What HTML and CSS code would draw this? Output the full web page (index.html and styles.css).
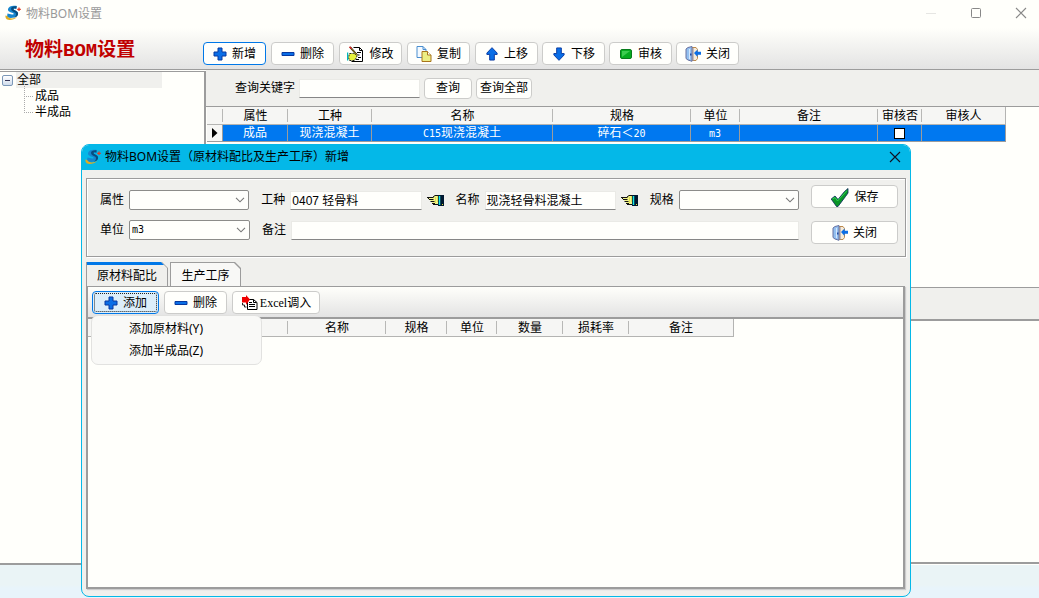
FILE: index.html
```
<!DOCTYPE html>
<html lang="zh-CN">
<head>
<meta charset="utf-8">
<title>物料BOM设置</title>
<link rel="stylesheet" href="styles.css">
</head>
<body>
<svg class="defs" aria-hidden="true">
  <defs>
    <symbol id="logo" viewBox="0 0 16 16">
      <path d="M12 1C8 0 3.500 1 3 4c-.4 2.200 2 3 4 3.700C9.500 8.500 9 9.500 7 9.500L2.500 8.500 2 12c4 2 10 .5 11-3 .3-2.300-2-3.300-3.700-4C7 4.200 8.500 3.400 11 4.200z" fill="#1686cf"/>
      <path d="M11.500 1.300C8 1 6 2 6 4s2.500 2.500 4.300 3.700c1.400 1.300.7 3.500-1.300 5 3-.6 5-3 3.700-5.500C11.500 5.700 8.500 5 8.500 4s1.500-.8 3-.3z" fill="#074d80"/>
      <path d="M.5 10.500C-.5 16 7 16.500 12.500 12 9 14 3 14 2.300 11z" fill="#e0ad20"/>
      <path d="M14 2.500v3.600M12.200 4.300h3.600" stroke="#e23a24" stroke-width="1.300"/>
    </symbol>
    <symbol id="plus" viewBox="0 0 14 14">
      <path d="M5 1h4v4h4v4H9v4H5V9H1V5h4z" fill="#0a6ee6" stroke="#0638a0"/>
    </symbol>
    <symbol id="minus" viewBox="0 0 14 14">
      <path d="M1 5.500h12v3H1z" fill="#0a6ee6" stroke="#0638a0"/>
    </symbol>
    <symbol id="edit" viewBox="0 0 17 17">
      <path d="M6.500 1.500h6l3 3v11H4.500" fill="#fff" stroke="#000"/>
      <path d="M12.500 1.500v3h3" fill="none" stroke="#000"/>
      <path d="M10 6.500h4M11 9h1.500M11 11.500h3M9 13.500h3" stroke="#000"/>
      <path d="M2.500 7.500h4l4 1-1 3-2 3h-5l-1-3z" fill="#e6f23c" stroke="#222" stroke-dasharray="2 1"/>
      <path d="M.5 6.500v8" stroke="#00b8b8" stroke-width="1.500"/>
      <path d="M3 1l7 8" stroke="#000" stroke-width="1.800"/>
      <path d="M3 1l7 8" stroke="#e8c820" stroke-width=".8"/>
      <path d="M2.500.8l2 2" stroke="#d22" stroke-width="1.500"/>
    </symbol>
    <symbol id="copy" viewBox="0 0 15 16">
      <path d="M.5.500h6l3 3v8h-9z" fill="#f4faff" stroke="#4a8ed0"/>
      <path d="M6.500.5v3h3" fill="none" stroke="#4a8ed0"/>
      <path d="M5.500 5.500h5.500l3.500 3.500v6.500h-9z" fill="#ecee84" stroke="#a8741c"/>
      <path d="M11 5.500V9h3.500" fill="#fff" stroke="#a8741c"/>
    </symbol>
    <symbol id="up" viewBox="0 0 14 15">
      <path d="M7 .7l5.500 5.800v1.500H9.500v6h-5V8h-3V6.500z" fill="#0a6ee6" stroke="#0638a0"/>
    </symbol>
    <symbol id="down" viewBox="0 0 14 15">
      <path d="M7 14.300l5.500-5.800V7H9.500V1h-5v6h-3v1.500z" fill="#0a6ee6" stroke="#0638a0"/>
    </symbol>
    <symbol id="audit" viewBox="0 0 14 14">
      <rect x="1.500" y="2.500" width="11" height="9" rx="1.500" fill="#06ac20" stroke="#087c1c"/>
      <path d="M3 4h8L3 10z" fill="#3ccc50"/>
    </symbol>
    <symbol id="door" viewBox="0 0 16 16">
      <path d="M7 1.500h4l1.500 2v9l-1.500 2H7z" fill="#f8ecd8" stroke="#bc8a4c"/>
      <path d="M1 3l2-1.500 4-1v14.800L3 14l-2-1.500z" fill="#94c0f0" stroke="#6670a0"/>
      <path d="M4.500 3v10" stroke="#d4e6fc"/>
      <path d="M5 7.500h1.500v2H5z" fill="#2448a0"/>
      <path d="M8 2v13" stroke="#8c8ca4"/>
      <path d="M9 7l3.500-3.500v2.200H16v3h-3.500V11z" fill="#0a6ee6"/>
    </symbol>
    <symbol id="check" viewBox="0 0 18 19">
      <path d="M.7 11l3.800-3 3 3.500L14 3.500l3.500-3v4.500l-2.500 3.500-7.500 10H6z" fill="#0a9428" stroke="#08245c" stroke-width=".8"/>
      <path d="M2 11l2.500-1.500L7 13 16.500 2.500" fill="none" stroke="#30d450"/>
    </symbol>
    <symbol id="hand" viewBox="0 0 17 12">
      <path d="M.5 3.500h5l2-2h4v9h-5l-1-1.500-1.500-1.500-1-1.500L1 5z" fill="#f0f488"/>
      <path d="M0 3.500h6.500M1 4.500h1M2 5.500h4.500M3.500 7.500h4M5 9.500h3M6 10.500h5.500M6 3l2-1.500h3.500" fill="none" stroke="#111"/>
      <path d="M8.500 3.500v5M10.500 2.500v6" stroke="#d6c820" stroke-dasharray="1 1"/>
      <path d="M11 1h6v11h-6z" fill="#001830"/>
      <path d="M12.500 2v9" stroke="#18e8e8" stroke-width="1.500"/>
      <path d="M15 10h1v1h-1z" fill="#e8e820"/>
    </symbol>
    <symbol id="import" viewBox="0 0 17 15">
      <path d="M6.500 4.500h6l3.500 3v7H6.500z" fill="#fff" stroke="#000"/>
      <path d="M8 7.500h3M8 9.500h6M8 11.500h6M12.500 4.500v3h3" fill="none" stroke="#000"/>
      <path d="M1 2h4V0l4 4.500L5 10V7.500H1z" fill="#f00000"/>
      <path d="M1.500 8v2h2v2h2" fill="none" stroke="#222"/>
    </symbol>
    <symbol id="close" viewBox="0 0 12 12">
      <path d="M1 1l10 10M11 1L1 11" stroke="currentColor" stroke-width="1.100"/>
    </symbol>
    <symbol id="chevron" viewBox="0 0 10 6">
      <path d="M1 .8l4 4 4-4" fill="none" stroke="#777" stroke-width="1.100"/>
    </symbol>
  </defs>
</svg>

<div class="window">
  <header class="titlebar">
    <svg class="i16"><use href="#logo"/></svg>
    <span class="caption">物料BOM设置</span>
    <div class="winctl">
      <button class="ctl faint" aria-label="最小化"><svg class="i12" viewBox="0 0 12 12"><path d="M1 6.500h10" stroke="currentColor"/></svg></button>
      <button class="ctl" aria-label="最大化"><svg class="i12" viewBox="0 0 12 12"><rect x="1.500" y="1.500" width="9" height="9" rx="1" fill="none" stroke="currentColor"/></svg></button>
      <button class="ctl" aria-label="关闭窗口"><svg class="i12"><use href="#close"/></svg></button>
    </div>
  </header>

  <div class="toolbar">
    <h1 class="heading">物料BOM设置</h1>
    <div class="btns">
      <button class="btn active"><svg class="i14"><use href="#plus"/></svg>新增</button>
      <button class="btn"><svg class="i14"><use href="#minus"/></svg>删除</button>
      <button class="btn"><svg class="i17"><use href="#edit"/></svg>修改</button>
      <button class="btn"><svg class="i16"><use href="#copy"/></svg>复制</button>
      <button class="btn"><svg class="i14"><use href="#up"/></svg>上移</button>
    </div>
    <div class="btns tight">
      <button class="btn"><svg class="i14"><use href="#down"/></svg>下移</button>
      <button class="btn"><svg class="i14"><use href="#audit"/></svg>审核</button>
      <button class="btn"><svg class="i16"><use href="#door"/></svg>关闭</button>
    </div>
  </div>

  <div class="work">
    <nav class="tree">
      <div class="root"><button class="toggle" aria-label="折叠"></button><span class="node selected">全部</span></div>
      <ul class="kids">
        <li>成品</li>
        <li>半成品</li>
      </ul>
    </nav>
    <main class="right">
      <form class="search">
        <label for="kw">查询关键字</label>
        <input class="text kw" id="kw" type="text">
        <button class="btn small" type="button">查询</button>
        <button class="btn small wide" type="button">查询全部</button>
      </form>
      <div class="upper">
        <table class="grid main-grid">
          <colgroup><col class="w16"><col class="w65"><col class="w84"><col class="w181"><col class="w138"><col class="w49"><col class="w138"><col class="w44"><col class="w84"></colgroup>
          <thead><tr><th></th><th>属性</th><th>工种</th><th>名称</th><th>规格</th><th>单位</th><th>备注</th><th>审核否</th><th>审核人</th></tr></thead>
          <tbody><tr><td class="mark"><svg class="tri" viewBox="0 0 6 10"><path d="M0 0l5.500 5L0 10z"/></svg></td><td>成品</td><td>现浇混凝土</td><td><span class="mono">C15</span>现浇混凝土</td><td>碎石＜<span class="mono">20</span></td><td><span class="mono">m3</span></td><td></td><td><input class="tick" type="checkbox" aria-label="审核否"></td><td></td></tr></tbody>
        </table>
      </div>
      <div class="band"></div>
      <div class="lower"></div>
    </main>
  </div>
  <footer class="status"></footer>
</div>

<section class="dialog" role="dialog" aria-labelledby="dlg">
  <header class="dlg-title">
    <svg class="i16"><use href="#logo"/></svg>
    <span id="dlg">物料BOM设置（原材料配比及生产工序）新增</span>
    <button class="ctl dark" aria-label="关闭对话框"><svg class="i12"><use href="#close"/></svg></button>
  </header>
  <div class="dlg-body">
    <form class="group">
      <div class="fields">
        <div class="row">
          <div class="field"><label for="attr">属性</label><span class="combo"><select id="attr"><option></option></select><svg><use href="#chevron"/></svg></span></div>
          <div class="field"><label for="kind">工种</label><input class="text mid" id="kind" type="text" value="0407 轻骨料"><button class="pick" type="button" aria-label="选择工种"><svg><use href="#hand"/></svg></button></div>
          <div class="field"><label for="name">名称</label><input class="text mid" id="name" type="text" value="现浇轻骨料混凝土"><button class="pick" type="button" aria-label="选择名称"><svg><use href="#hand"/></svg></button></div>
          <div class="field"><label for="spec">规格</label><span class="combo"><select id="spec"><option></option></select><svg><use href="#chevron"/></svg></span></div>
        </div>
        <div class="row">
          <div class="field"><label for="unit">单位</label><span class="combo"><select class="mono" id="unit"><option>m3</option></select><svg><use href="#chevron"/></svg></span></div>
          <div class="field grow"><label for="note">备注</label><input class="text" id="note" type="text"></div>
        </div>
      </div>
      <div class="actions">
        <button class="btn" type="button"><svg class="i19"><use href="#check"/></svg>保存</button>
        <button class="btn" type="button"><svg class="i16"><use href="#door"/></svg>关闭</button>
      </div>
    </form>

    <div class="tabs" role="tablist">
      <button class="tab current" role="tab" aria-selected="true">原材料配比</button>
      <button class="tab" role="tab" aria-selected="false">生产工序</button>
    </div>
    <div class="panel">
      <div class="panel-bar">
        <div class="anchor">
          <button class="btn add" aria-haspopup="menu"><svg class="i14"><use href="#plus"/></svg>添加</button>
          <div class="menu" role="menu">
            <button role="menuitem">添加原材料(Y)</button>
            <button role="menuitem">添加半成品(Z)</button>
          </div>
        </div>
        <button class="btn"><svg class="i14"><use href="#minus"/></svg>删除</button>
        <button class="btn excel"><svg class="i17"><use href="#import"/></svg><span>Excel调入</span></button>
      </div>
      <table class="grid">
        <colgroup><col class="w200"><col class="w98"><col class="w61"><col class="w50"><col class="w66"><col class="w66"><col class="w105"></colgroup>
        <thead><tr><th></th><th>名称</th><th>规格</th><th>单位</th><th>数量</th><th>损耗率</th><th>备注</th></tr></thead>
      </table>
    </div>
  </div>
</section>
</body>
</html>
```

FILE: styles.css
```
* { box-sizing: border-box; }

body {
  margin: 0;
  background: #fffffb;
  color: #000;
  font: 12px/16px "Liberation Sans", "Noto Sans CJK SC", sans-serif;
}

button, input, select { font: inherit; color: inherit; }
svg { display: block; flex: none; }
.defs { position: absolute; width: 0; height: 0; }
.i12 { width: 12px; height: 12px; }
.i14 { width: 14px; height: 14px; }
.i16 { width: 16px; height: 16px; }
.i17 { width: 17px; height: 17px; }
.i19 { width: 19px; height: 19px; }

.window { display: flex; flex-direction: column; height: 100vh; overflow: hidden; }

.titlebar { display: flex; align-items: center; height: 28px; padding: 0 3px 2px 5px; }
.caption {
  margin-left: 5px;
  padding-top: 2px;
  color: #999;
  font-family: "Noto Sans", "Noto Sans CJK SC", sans-serif;
}
.winctl { display: flex; margin-left: auto; }
.ctl {
  display: grid;
  place-items: center;
  width: 30px;
  height: 26px;
  padding: 0;
  border: 0;
  background: none;
  color: #888;
}
.winctl .ctl { margin-left: 15px; }
.ctl.faint { color: #e6e6e3; }

.toolbar {
  display: flex;
  align-items: center;
  gap: 4px;
  height: 42px;
  padding: 10px 0 0 25px;
  border-bottom: 1px solid #9c9c9c;
  background: linear-gradient(#fffffb, #e3e3e3);
}
.heading {
  flex: none;
  width: 174px;
  margin: 0 0 6px;
  color: #c00000;
  font: bold 19px/24px "Liberation Mono", "Noto Sans CJK SC", monospace;
}
.btns { display: flex; gap: 5px; }
.btns.tight { gap: 4px; }

.btn {
  display: flex;
  align-items: center;
  justify-content: center;
  gap: 5px;
  width: 63px;
  height: 23px;
  padding: 1px 0 0;
  border: 1px solid #ccccca;
  border-radius: 4px;
  background: #fffffc;
  white-space: nowrap;
}
.btn.active { border-color: #0078e8; }
.btn.small { width: 48px; height: 21px; padding: 0; }
.btn.wide { width: 56px; }

.work { display: flex; flex: 1; min-height: 0; }
.tree {
  width: 206px;
  margin-top: 1px;
  padding-left: 2px;
  border: solid #9c9c9c;
  border-width: 1px 2px 2px 0;
}
.root { display: flex; align-items: center; height: 16px; }
.toggle {
  width: 11px;
  height: 11px;
  margin-right: 3px;
  padding: 0;
  border: 1px solid #7c98b8;
  border-radius: 2px;
  background: linear-gradient(#335, #335) center / 5px 1px no-repeat, linear-gradient(#fff, #d0dcec);
}
.node { width: 146px; padding-left: 1px; background: #f0f0ed; }
.kids { margin: 0 0 0 22px; padding: 0; list-style: none; }
.kids li { position: relative; height: 16px; padding-left: 11px; }
.kids li::before {
  content: "";
  position: absolute;
  left: 0;
  top: -8px;
  width: 8px;
  height: 16px;
  border: dotted #aaa;
  border-width: 0 0 1px 1px;
}

.right { display: flex; flex: 1; flex-direction: column; min-width: 0; margin-bottom: 1px; border-bottom: 2px solid #9c9c9c; }
.search {
  display: flex;
  align-items: center;
  gap: 4px;
  flex: none;
  height: 37px;
  padding-left: 29px;
  border-bottom: 1px solid #9c9c9c;
  background: #f0f0ed;
}
.text {
  min-width: 0;
  height: 19px;
  padding: 0 1px 2px;
  border: 1px solid #eaeae6;
  border-bottom-color: #868686;
  background: #fffffc;
}
.kw { width: 121px; }
.upper { flex: none; height: 180px; padding-left: 1px; }
.band { flex: none; height: 34px; border: solid #9c9c9c; border-width: 1px 0 2px; background: #f0f0ed; }
.lower { flex: 1; }

.status { flex: none; height: 33px; background: linear-gradient(#eaf4f6 60%, #e8f4fb 70%); }

.grid { table-layout: fixed; width: 0; border-spacing: 0; }
.grid th {
  height: 18px;
  padding: 0;
  border-bottom: 1px solid #b4b4b2;
  background: linear-gradient(#b8b8b6, #b8b8b6) right center / 1px 13px no-repeat, #f6f6f4;
  font-weight: normal;
  line-height: 16px;
  white-space: nowrap;
}
.grid th:last-child { border-right: 1px solid #b4b4b2; background: #f6f6f4; }
.grid td {
  height: 17px;
  padding: 0;
  border: solid #9c9c9c;
  border-width: 0 1px 1px 0;
  background: #0078f0;
  color: #fff;
  line-height: 16px;
  text-align: center;
  white-space: nowrap;
}
.grid .mark { background: #f6f6f4; }
.tri { width: 6px; height: 10px; margin-left: 5px; }
.mono { font-family: "DejaVu Sans Mono", monospace; font-size: 10px; line-height: 1; }
.tick {
  display: block;
  width: 11px;
  height: 11px;
  margin: 0 auto;
  border: 1px solid #000;
  background: #fff;
  appearance: none;
}
.w16 { width: 16px; } .w44 { width: 44px; } .w49 { width: 49px; } .w50 { width: 50px; }
.w61 { width: 61px; } .w65 { width: 65px; } .w66 { width: 66px; } .w84 { width: 84px; }
.w98 { width: 98px; } .w105 { width: 105px; } .w138 { width: 138px; } .w181 { width: 181px; }
.w200 { width: 200px; }

/* Dialog floats over the main window */
.dialog {
  position: absolute;
  inset: 144px 128px 1px 81px;
  display: flex;
  flex-direction: column;
  overflow: hidden;
  border: 1px solid #04b8e8;
  border-radius: 8px;
  background: #f0f0ed;
}
.dlg-title {
  display: flex;
  align-items: center;
  flex: none;
  gap: 4px;
  height: 25px;
  padding: 0 0 1px 3px;
  background: #04b8e8;
  font-family: "Noto Sans", "Noto Sans CJK SC", sans-serif;
}
.ctl.dark { margin-left: auto; color: #112; }
.dlg-body { display: flex; flex: 1; flex-direction: column; padding: 8px 4px 7px; }

.group {
  display: flex;
  gap: 12px;
  height: 79px;
  padding: 6px 7px 6px 13px;
  border: 1px solid #9c9c9c;
  box-shadow: 1px 1px #fff, inset 1px 1px #fff;
}
.fields { display: flex; flex: 1; flex-direction: column; gap: 10px; padding-top: 5px; min-width: 0; }
.row { display: flex; gap: 12px; }
.field { display: flex; align-items: center; gap: 5px; height: 20px; }
.field label { flex: none; }
.grow { flex: 1; }
.grow .text { flex: 1; }
.mid { width: 132px; }
.combo { display: grid; width: 121px; align-items: center; }
.combo select {
  grid-area: 1 / 1;
  width: 100%;
  height: 20px;
  padding: 0 2px;
  border: 1px solid #8c8c8a;
  border-radius: 2px;
  background: #fffffc;
  appearance: none;
}
.combo svg { grid-area: 1 / 1; justify-self: end; width: 10px; height: 6px; margin-right: 4px; pointer-events: none; }
.pick { padding: 0; border: 0; background: none; }
.pick svg { width: 17px; height: 12px; }
.actions { display: flex; flex-direction: column; gap: 13px; width: 87px; }
.actions .btn { width: 100%; }

.tabs { display: flex; align-items: flex-end; gap: 2px; height: 24px; margin-top: 5px; }
.tab {
  position: relative;
  isolation: isolate;
  width: 71px;
  height: 24px;
  padding: 3px 0 0;
  border: 0;
  background: #9c9c9c;
  clip-path: polygon(0 0, calc(100% - 6px) 0, 100% 6px, 100% 100%, 0 100%);
}
.tab::before {
  content: "";
  position: absolute;
  z-index: -1;
  inset: 1px 1px 0;
  background: #f8f8f6;
  clip-path: polygon(0 0, calc(100% - 6px) 0, 100% 6px, 100% 100%, 0 100%);
}
.tab.current { width: 82px; }
.tab.current::before { border-top: 3px solid #0078e8; background: #f0f0ed; inset: 0 1px 0; }

.panel {
  flex: 1;
  margin-right: 1px;
  border: solid #9c9c9c;
  border-width: 1px 2px 2px;
  background: #fffffb;
  box-shadow: 1px 1px 1px #ccc;
}
.panel-bar {
  display: flex;
  align-items: center;
  gap: 5px;
  height: 32px;
  padding-left: 4px;
  border-bottom: 2px solid #9c9c9c;
  background: linear-gradient(#fffffb, #e3e3e3);
}
.anchor { position: relative; }
.add {
  width: 67px;
  border-color: #0078e8;
  background: #dceefa;
  outline: 1px dotted #222;
  outline-offset: -3px;
}
.excel { width: 88px; gap: 2px; font-family: "Liberation Serif", "Noto Sans CJK SC", serif; }
.menu {
  position: absolute;
  z-index: 2;
  left: -1px;
  top: 24px;
  width: 171px;
  padding: 2px 0;
  border: 1px solid #e2e2e0;
  border-radius: 7px;
  background: #f9f9f7;
}
.menu button {
  display: block;
  width: 100%;
  height: 22px;
  padding: 0 0 0 37px;
  border: 0;
  background: none;
  font-family: "Noto Sans", "Noto Sans CJK SC", sans-serif;
  text-align: left;
}
```
